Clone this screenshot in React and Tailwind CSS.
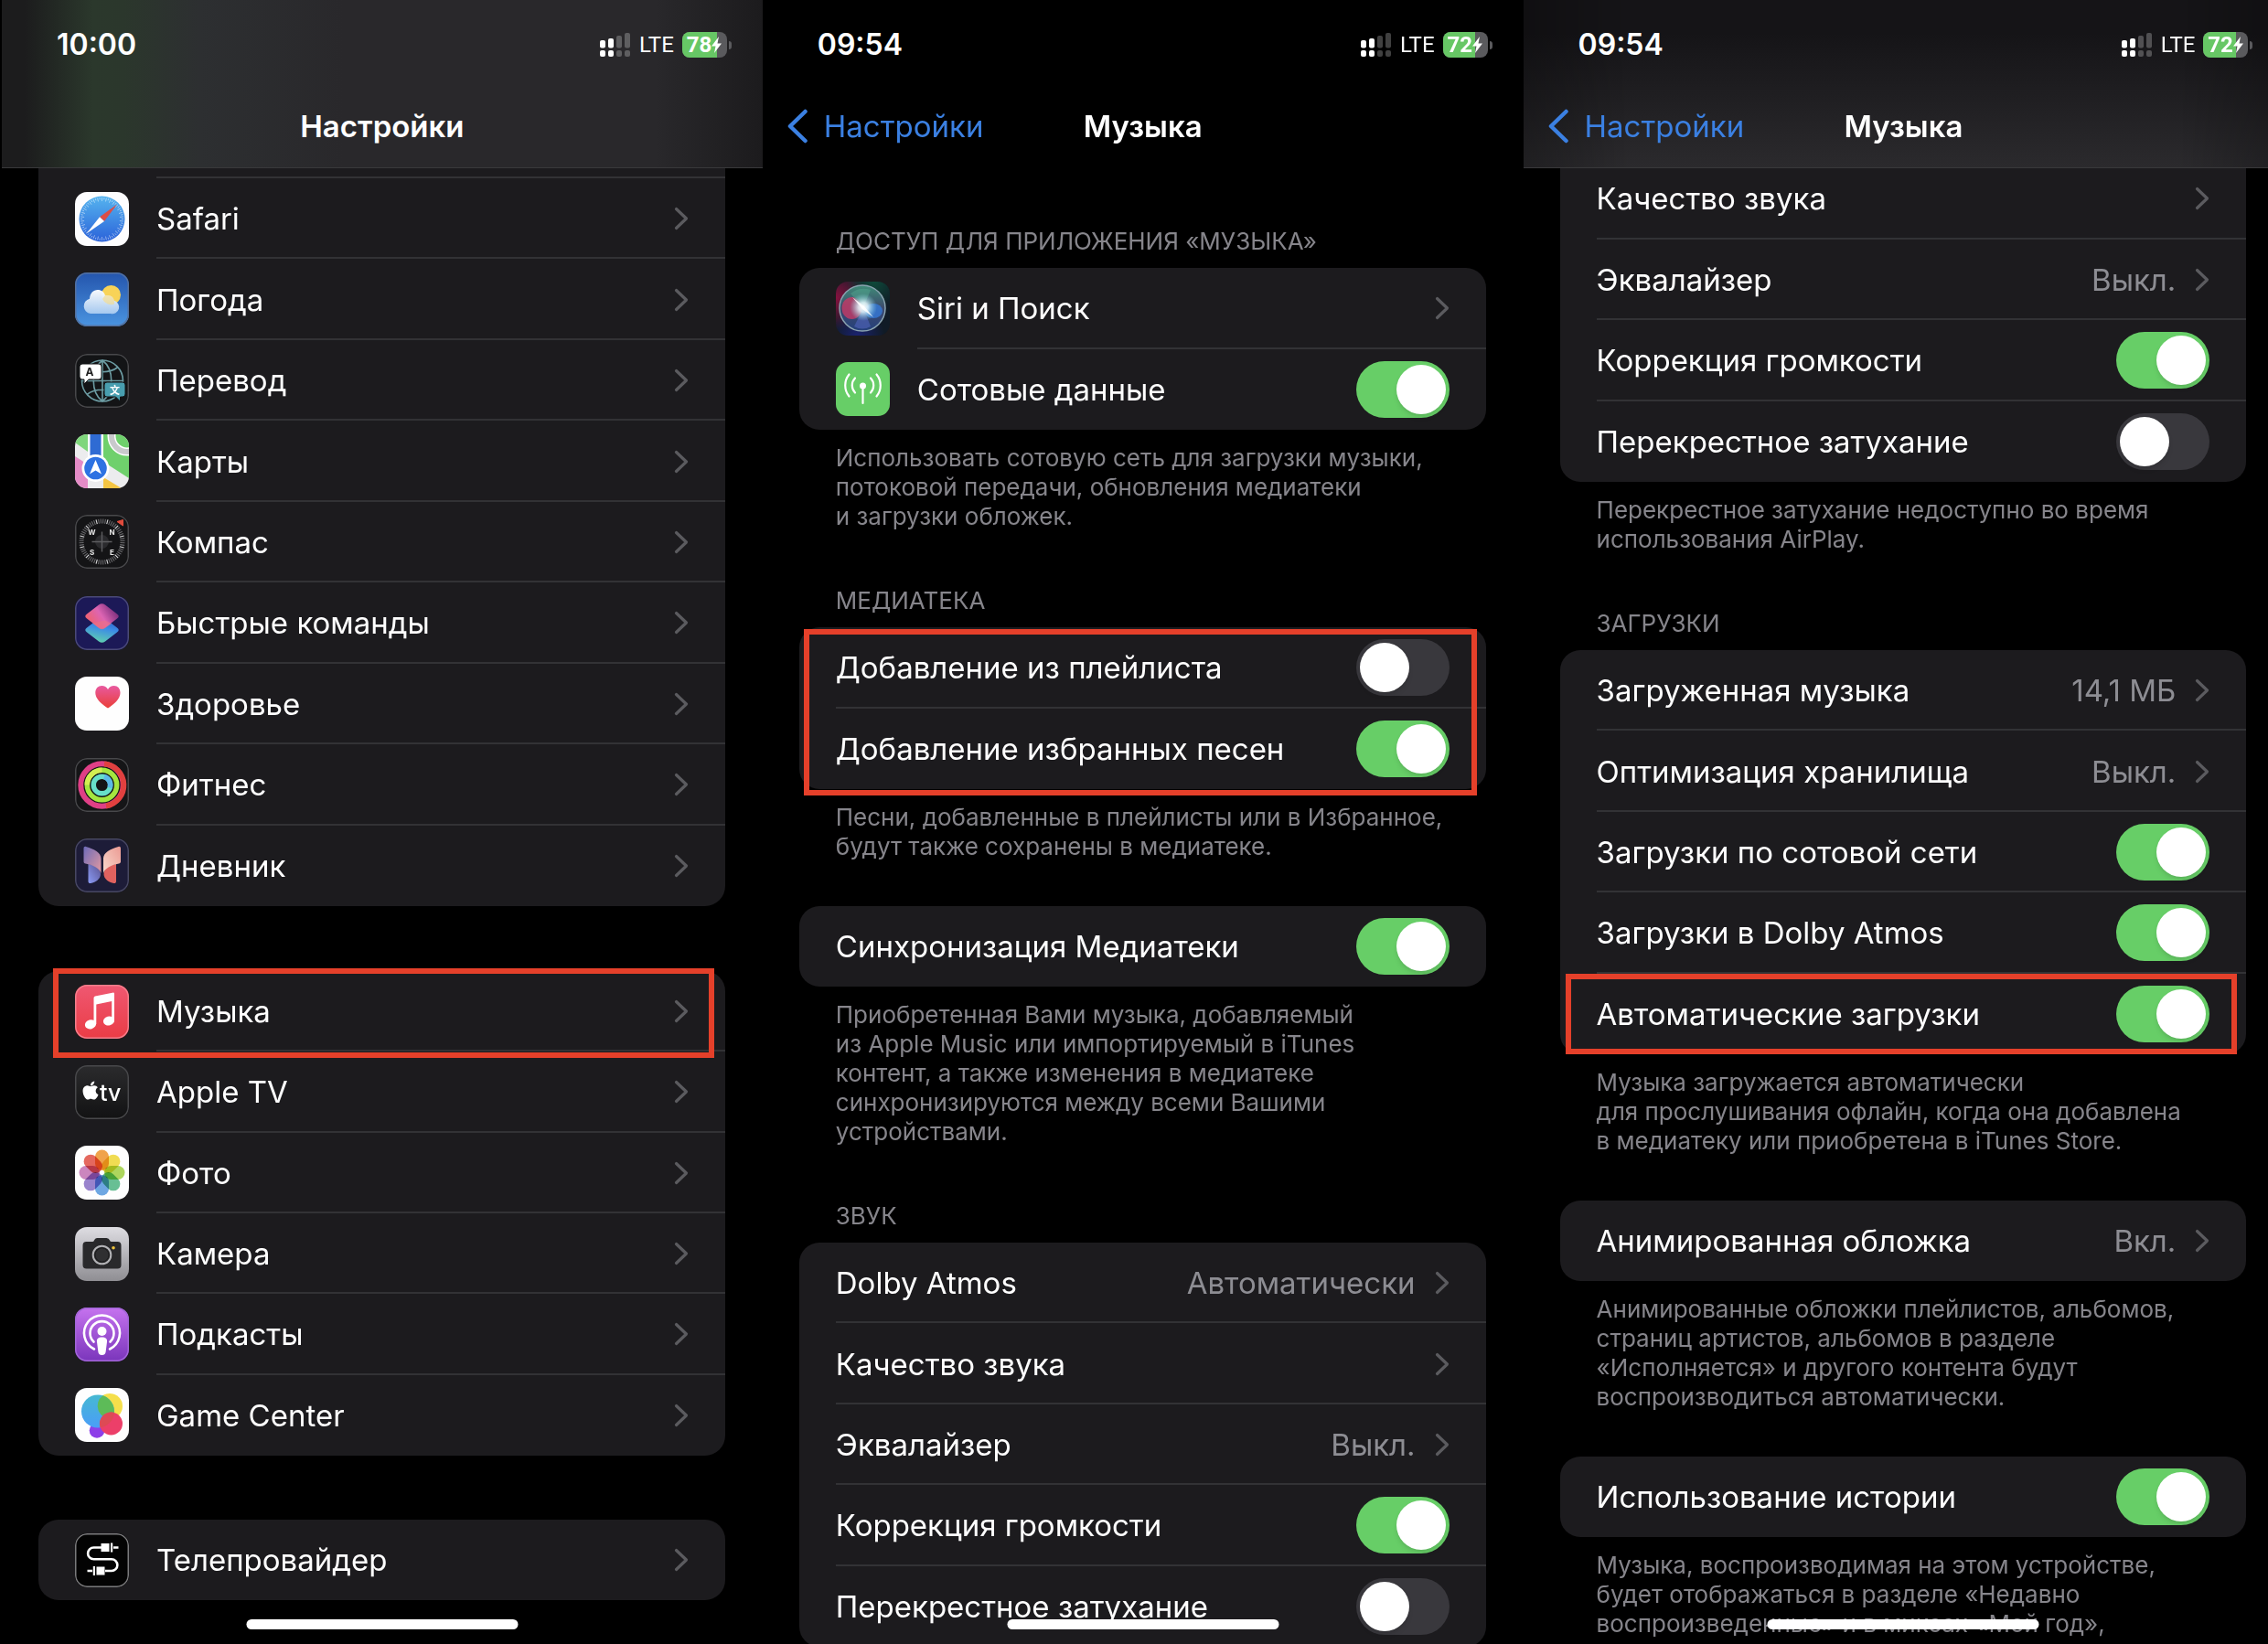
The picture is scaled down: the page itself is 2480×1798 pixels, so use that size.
import { FaApple } from "react-icons/fa";

/* ---------- App icons, 59x59 ---------- */

const Tile = ({ fill, stroke, children }) => (
  <svg viewBox="0 0 59 59" className="size-[59px] shrink-0 overflow-hidden rounded-[13px]" aria-hidden="true">
    <rect width="59" height="59" fill={fill} />
    {children}
    {stroke && <rect x="0.75" y="0.75" width="57.5" height="57.5" rx="12.5" fill="none" stroke={stroke} strokeWidth="1.5" />}
  </svg>
);

const ticks = (count) => Array.from({ length: count }, (_, i) => (i * 360) / count);

const SafariIcon = () => (
  <Tile fill="#fdfdfe">
    <defs>
      <linearGradient id="safari" x1="0" y1="0" x2="0" y2="1">
        <stop offset="0" stopColor="#55b4ef" />
        <stop offset="1" stopColor="#2b62d9" />
      </linearGradient>
    </defs>
    <circle cx="29.5" cy="29.5" r="25" fill="url(#safari)" />
    {ticks(60).map((a, i) => (
      <path key={a} d={i % 2 ? "M29.5 6v2.2" : "M29.5 6v4"} stroke="#fff" strokeOpacity="0.65" strokeWidth="0.7" transform={`rotate(${a} 29.5 29.5)`} />
    ))}
    <path d="M46 13.500L27 27.200L32 32Z" fill="#dc4c46" />
    <path d="M12.500 45.500L27 27.200L32 32Z" fill="#fff" />
  </Tile>
);

const WeatherIcon = () => (
  <Tile fill="url(#sky)" stroke="#54719f">
    <defs>
      <linearGradient id="sky" x1="0" y1="0" x2="0" y2="1">
        <stop offset="0" stopColor="#2455ad" />
        <stop offset="1" stopColor="#4a94e0" />
      </linearGradient>
      <linearGradient id="cloud" x1="0" y1="0" x2="0" y2="1">
        <stop offset="0" stopColor="#fff" />
        <stop offset="1" stopColor="#a9cbf0" />
      </linearGradient>
    </defs>
    <circle cx="39.500" cy="24.500" r="10.500" fill="#f8d357" />
    <path d="M17 45a8.300 8.300 0 0 1-1-16.300C16.500 22.500 20 19 24.800 19c4.200 0 7 2.300 8.200 6 6.500-.8 9.500 2.500 9.700 5.800A7.300 7.300 0 0 1 39 45Z" fill="url(#cloud)" fillOpacity="0.96" />
    <path d="M33 25c6.500-.8 9.500 2.500 9.700 5.800l.4 3.700A10.500 10.500 0 0 1 30 29Z" fill="#f8d97a" fillOpacity="0.55" />
  </Tile>
);

const TranslateIcon = () => (
  <Tile fill="#131416" stroke="#48484b">
    <g fill="none" stroke="#6c9ca3" strokeWidth="1.6">
      <circle cx="30" cy="29.500" r="22.500" />
      <path d="M30 7v45M7.500 29.500h45M30 7C17 17 17 42 30 52M30 7c13 10 13 35 0 45M13 14.500c9 7 25 7 34 0M13 44.500c9-7 25-7 34 0" />
    </g>
    <path d="M8 11h18a3 3 0 0 1 3 3v11a3 3 0 0 1-3 3H15l-5 5v-5H8a3 3 0 0 1-3-3V14a3 3 0 0 1 3-3Z" fill="#fff" stroke="#131416" strokeWidth="1" />
    <text x="16" y="24" fontSize="12" fontWeight="700" fill="#222" textAnchor="middle">A</text>
    <path d="M35 31h17a3 3 0 0 1 3 3v10a3 3 0 0 1-3 3h-2.500v5l-5-5H35a3 3 0 0 1-3-3V34a3 3 0 0 1 3-3Z" fill="#489eaf" stroke="#131416" strokeWidth="1" />
    <text x="43.500" y="43.500" fontSize="11" fontWeight="700" fill="#fff" textAnchor="middle" className="font-['Noto_Sans_CJK_SC',sans-serif]">文</text>
  </Tile>
);

const MapsIcon = () => (
  <Tile fill="#ececee">
    <path d="M0 0h14v19L0 9Z" fill="#7fd67c" />
    <path d="M31 0h28v48L31 30Z" fill="#6fd06c" />
    <circle cx="57" cy="2" r="17" fill="none" stroke="#fff" strokeWidth="9" />
    <circle cx="57" cy="2" r="17" fill="none" stroke="#c9c9cc" strokeWidth="6" />
    <path d="M0 24l14 9v26H0Z" fill="#e48bc6" />
    <path d="M31 47l20 12H31Z" fill="#f5c543" />
    <path d="M14 0h17v59H14Z" fill="#fff" />
    <path d="M14 48h17v11H14Z" fill="#ececee" />
    <path d="M16.500 0h12v30h-12Z" fill="#2f6bd3" />
    <circle cx="22.500" cy="37" r="15" fill="#fff" />
    <circle cx="22.500" cy="37" r="12.300" fill="#2e72e2" />
    <path d="M22.500 28l6.500 15.500-6.500-4-6.500 4Z" fill="#fff" />
  </Tile>
);

const CompassIcon = () => (
  <Tile fill="#141416" stroke="#48484b">
    {ticks(60).map((a, i) => (
      <path key={a} d="M29.500 4.500v5" stroke={i % 5 ? "#6a6a6d" : "#dcdcde"} strokeWidth="1.1" transform={`rotate(${a + 15} 29.5 29.5)`} />
    ))}
    <circle cx="29.500" cy="29.500" r="7.500" fill="#2a2a2d" />
    <path d="M29.500 18.500v22M18.500 29.500h22" stroke="#5e5e61" strokeWidth="1.4" />
    <g fontSize="8" fontWeight="700" fill="#e6e6e6" textAnchor="middle">
      <text x="18.500" y="22">W</text>
      <text x="40.500" y="22">N</text>
      <text x="18.500" y="43.500">S</text>
      <text x="40.500" y="43.500">E</text>
    </g>
    <path d="M52.500 5.500v6.500L46 7.500Z" fill="#e04b3c" stroke="#e04b3c" strokeLinejoin="round" />
  </Tile>
);

const ShortcutsIcon = () => (
  <Tile fill="#1c1957" stroke="#4b4a78">
    <defs>
      <linearGradient id="scTop" x1="0.1" y1="0.7" x2="0.9" y2="0.3">
        <stop offset="0" stopColor="#ee6170" />
        <stop offset="0.5" stopColor="#dd65b3" />
        <stop offset="1" stopColor="#81317f" />
      </linearGradient>
      <linearGradient id="scBottom" x1="0.3" y1="1" x2="0.6" y2="0">
        <stop offset="0" stopColor="#62d3ac" />
        <stop offset="0.6" stopColor="#3c8be6" />
        <stop offset="1" stopColor="#2c5cc4" />
      </linearGradient>
    </defs>
    <path d="M26 24.500q3.500-2.500 7 0L46 34.500q3.500 2.500 0 5L33 49.500q-3.500 2.500-7 0L13 39.500q-3.500-2.500 0-5Z" fill="url(#scBottom)" />
    <path d="M26 9.500q3.500-2.500 7 0L46 19.500q3.500 2.500 0 5L33 34.500q-3.500 2.500-7 0L13 24.500q-3.500-2.500 0-5Z" fill="url(#scTop)" />
    <path d="M33 26.500l7 3.500-7 5q-3.500 2.500-7 0l-7-5.500Z" fill="#f07280" fillOpacity="0.55" />
  </Tile>
);

const HealthIcon = () => (
  <Tile fill="#fefefe">
    <defs>
      <linearGradient id="heart" x1="0" y1="0" x2="0" y2="1">
        <stop offset="0" stopColor="#e8599f" />
        <stop offset="1" stopColor="#ea3f38" />
      </linearGradient>
    </defs>
    <path d="M36 34.500C29 30 22.300 24.500 22.300 17.500c0-4.500 3-7.500 7-7.500 3 0 5.400 1.500 6.700 4 1.300-2.500 3.700-4 6.700-4 4 0 6.800 3 6.800 7.500 0 7-6.500 12.500-13.500 17Z" fill="url(#heart)" />
  </Tile>
);

const FitnessIcon = () => (
  <Tile fill="#151517" stroke="#48484b">
    <g fill="none" strokeWidth="6">
      <circle cx="29.500" cy="29.500" r="23.200" stroke="#df3f86" />
      <path d="M32 6.500a23.200 23.200 0 0 1 2 46" stroke="#e0403f" />
      <circle cx="29.500" cy="29.500" r="16.200" stroke="#a4e53f" strokeWidth="5.500" />
      <path d="M29.500 13.300a16.200 16.200 0 0 0-16.200 16.200" stroke="#d3ee52" strokeWidth="5.500" />
      <circle cx="29.500" cy="29.500" r="9.300" stroke="#67dfc9" strokeWidth="5.500" />
      <path d="M32 20.500a9.300 9.300 0 0 1 6 12" stroke="#5bb8e6" strokeWidth="5.500" />
    </g>
  </Tile>
);

const JournalIcon = () => (
  <Tile fill="#1d1c38" stroke="#484862">
    <defs>
      <linearGradient id="jA" x1="0" y1="0" x2="1" y2="1">
        <stop offset="0" stopColor="#6d6bb8" />
        <stop offset="1" stopColor="#e49aa0" />
      </linearGradient>
      <linearGradient id="jB" x1="1" y1="0" x2="0" y2="1">
        <stop offset="0" stopColor="#eb9a93" />
        <stop offset="1" stopColor="#f9d9cc" />
      </linearGradient>
      <linearGradient id="jC" x1="1" y1="0" x2="0" y2="1">
        <stop offset="0" stopColor="#5a5290" />
        <stop offset="1" stopColor="#8b9cf6" />
      </linearGradient>
    </defs>
    <path d="M14.500 28c8 1 13.500 5.500 13.500 11 0 5-5 9-11 10-1.500.2-2.500-.7-2.500-2Z" fill="url(#jC)" />
    <path d="M45 28c-8 1-13.500 5.500-13.500 11 0 5 5 9 11 10 1.500.2 2.500-.7 2.500-2Z" fill="#e0625f" />
    <path d="M9.500 11c0-1.500 1-2.500 2.500-2 9 2.500 16.500 6.500 16.500 13v16c-1.500-5-8-9-17-10.500-1.300-.3-2-1-2-2.300Z" fill="url(#jA)" />
    <path d="M50 11c0-1.500-1-2.500-2.500-2-9 2.500-16.500 6.500-16.500 13v16c1.500-5 8-9 17-10.500 1.300-.3 2-1 2-2.300Z" fill="url(#jB)" />
  </Tile>
);

const MusicIcon = () => (
  <Tile fill="url(#music)" stroke="#f37f8c">
    <defs>
      <linearGradient id="music" x1="0" y1="0" x2="0" y2="1">
        <stop offset="0" stopColor="#ef5872" />
        <stop offset="1" stopColor="#ea3c45" />
      </linearGradient>
    </defs>
    <path d="M20.500 14.500q0-1.500 1.500-1.900L41 8.700q2-.4 2 1.300v28.500h-2.800V18L23.300 21.500V43h-2.800Z" fill="#fff" />
    <ellipse cx="17" cy="43.300" rx="6.200" ry="5" fill="#fff" transform="rotate(-15 17 43.3)" />
    <ellipse cx="37" cy="39.500" rx="6.200" ry="5" fill="#fff" transform="rotate(-15 37 39.5)" />
  </Tile>
);

const AppleTvIcon = () => (
  <Tile fill="url(#atv)" stroke="#48484b">
    <defs>
      <linearGradient id="atv" x1="0" y1="0" x2="0" y2="1">
        <stop offset="0" stopColor="#2b2b2d" />
        <stop offset="1" stopColor="#121213" />
      </linearGradient>
    </defs>
    <FaApple x="5.500" y="16" size="23" color="#fff" />
    <text x="27" y="38.500" fontSize="25" fontWeight="500" fill="#fff">tv</text>
  </Tile>
);

const petals = ["#f09a37", "#f0d93f", "#a5d34b", "#58b98a", "#5e9fe0", "#8f77c9", "#c77ab8", "#e2584d"];

const PhotosIcon = () => (
  <Tile fill="#fefefe">
    {petals.map((color, i) => (
      <rect key={color} x="22" y="4.500" width="15" height="22.500" rx="7.500" fill={color} fillOpacity="0.9" transform={`rotate(${i * 45} 29.5 29.5)`} className="mix-blend-multiply" />
    ))}
    <circle cx="29.500" cy="29.500" r="2" fill="#fff" />
  </Tile>
);

const CameraIcon = () => (
  <Tile fill="url(#camera)">
    <defs>
      <linearGradient id="camera" x1="0" y1="0" x2="0" y2="1">
        <stop offset="0" stopColor="#dedde2" />
        <stop offset="1" stopColor="#8f8e93" />
      </linearGradient>
    </defs>
    <path d="M12.500 16H19q1.500 0 2-1.500.8-2.500 3-2.500h10.500q2.500 0 3.500 2.500.5 1.500 2 1.500h6.500q4 0 4 4v21.500q0 4-4 4h-34q-4 0-4-4V20q0-4 4-4Z" fill="#29292b" />
    <circle cx="29.500" cy="30.500" r="9.800" fill="none" stroke="#b3b3b6" strokeWidth="2" />
    <circle cx="29.500" cy="30.500" r="7.500" fill="#2f2f31" stroke="#1b1b1c" />
    <circle cx="42" cy="22.700" r="1.800" fill="#f1c53c" />
  </Tile>
);

const PodcastsIcon = () => (
  <Tile fill="url(#pod)" stroke="#a266d8">
    <defs>
      <linearGradient id="pod" x1="0" y1="0" x2="0" y2="1">
        <stop offset="0" stopColor="#c673ef" />
        <stop offset="1" stopColor="#7a35bb" />
      </linearGradient>
    </defs>
    <g fill="none" stroke="#fff" strokeWidth="2.600" strokeLinecap="round">
      <path d="M21 45.500a19.500 19.500 0 1 1 17 0" />
      <path d="M20.500 37.500a13 13 0 1 1 18 0" />
    </g>
    <circle cx="29.500" cy="26" r="5" fill="#fff" />
    <path d="M29.500 32.500c4 0 6 1.500 5.500 5l-1.300 10.500c-.3 2.500-1.500 4-4.200 4s-3.900-1.500-4.200-4L24 37.500c-.5-3.500 1.500-5 5.500-5Z" fill="#fff" />
  </Tile>
);

const GameCenterIcon = () => (
  <Tile fill="#fefefe">
    <defs>
      <linearGradient id="gcBlue" x1="0" y1="0" x2="0" y2="1">
        <stop offset="0" stopColor="#46b9d2" />
        <stop offset="1" stopColor="#4a9df8" />
      </linearGradient>
    </defs>
    <circle cx="24" cy="46.500" r="8.300" fill="#8d3fe8" />
    <circle cx="38" cy="20" r="14" fill="#f5df4b" />
    <circle cx="25" cy="25.500" r="18" fill="url(#gcBlue)" />
    <path d="M30.500 8.300A18 18 0 0 1 41 33.500 14 14 0 0 1 30.500 8.300Z" fill="#5dbb58" />
    <circle cx="39.500" cy="39" r="12.500" fill="#ec3f69" />
    <path d="M43 27a12.500 12.500 0 0 0-14 5.500 12 12 0 0 0-1.300 10.800A18 18 0 0 0 43 27Z" fill="#dd4a55" />
  </Tile>
);

const TvProviderIcon = () => (
  <Tile fill="#030303" stroke="#7a7a7c">
    <path d="M29 15.500h-8.500a6.300 6.300 0 0 0 0 12.800H40a6.300 6.300 0 0 1 0 12.700h-7" fill="none" stroke="#fff" strokeWidth="2.600" />
    <path d="M28.500 11h9v9h-9ZM39 10.500h2.200v10H39ZM42 14.200h5.500v2.600H42ZM23.500 36.500h9v9h-9ZM19.800 36h2.200v10h-2.200ZM13.500 39.700H19v2.600h-5.500Z" fill="#fff" />
  </Tile>
);

const SiriIcon = () => (
  <Tile fill="#101b26">
    <defs>
      <radialGradient id="sRed" cx="0" cy="0.3" r="0.6">
        <stop offset="0" stopColor="#86123f" />
        <stop offset="1" stopColor="#86123f" stopOpacity="0" />
      </radialGradient>
      <radialGradient id="sGreen" cx="0.7" cy="0" r="0.5">
        <stop offset="0" stopColor="#0e4a3a" />
        <stop offset="1" stopColor="#0e4a3a" stopOpacity="0" />
      </radialGradient>
      <radialGradient id="sBlue" cx="0.4" cy="1" r="0.5">
        <stop offset="0" stopColor="#1a2270" />
        <stop offset="1" stopColor="#1a2270" stopOpacity="0" />
      </radialGradient>
      <radialGradient id="sGlow">
        <stop offset="0" stopColor="#fff" />
        <stop offset="0.35" stopColor="#e6fbff" stopOpacity="0.85" />
        <stop offset="1" stopColor="#7fd0e0" stopOpacity="0" />
      </radialGradient>
      <linearGradient id="sOrb" x1="0" y1="0" x2="0" y2="1">
        <stop offset="0" stopColor="#3f8c78" />
        <stop offset="0.5" stopColor="#3d4a6c" />
        <stop offset="1" stopColor="#24407c" />
      </linearGradient>
    </defs>
    <rect width="59" height="59" fill="url(#sRed)" />
    <rect width="59" height="59" fill="url(#sGreen)" />
    <rect width="59" height="59" fill="url(#sBlue)" />
    <circle cx="29" cy="29" r="25" fill="url(#sOrb)" stroke="#8aa3b0" strokeWidth="1.500" />
    <ellipse cx="17.500" cy="29" rx="11" ry="12" fill="#c53a67" fillOpacity="0.8" />
    <ellipse cx="41" cy="32" rx="10" ry="8" fill="#3577d2" fillOpacity="0.85" />
    <path d="M30 29L20 49q9 5 18 0Z" fill="#4c5fb4" fillOpacity="0.7" />
    <path d="M30 29L16 13q10-8 22-4Z" fill="#52a58d" fillOpacity="0.5" />
    <circle cx="30" cy="28" r="15" fill="url(#sGlow)" />
    <path d="M18 17l13 10 10 12-12-9Z" fill="#fff" fillOpacity="0.85" />
  </Tile>
);

const CellularIcon = () => (
  <Tile fill="#67ce67">
    <g fill="none" stroke="#fff" strokeWidth="2.200" strokeLinecap="round">
      <path d="M29.500 27v18" />
      <path d="M21 33.500a11.500 11.500 0 0 1 0-16M38 33.500a11.500 11.500 0 0 0 0-16" />
      <path d="M14.500 37.500a19 19 0 0 1 0-24M44.500 37.500a19 19 0 0 0 0-24" />
    </g>
    <circle cx="29.500" cy="26" r="3.500" fill="#fff" />
  </Tile>
);

/* ---------- Status bar ---------- */

const Signal = () => (
  <svg width="34" height="28" viewBox="0 0 34 28" aria-hidden="true">
    <g fill="#fff">
      <rect x="0" y="9" width="6" height="8.500" rx="2" />
      <rect x="9" y="7" width="6" height="10.500" rx="2" />
      <rect x="0" y="20" width="6" height="7" rx="2" />
      <rect x="9" y="20" width="6" height="7" rx="2" />
    </g>
    <g fill="#fff" fillOpacity="0.25">
      <rect x="18" y="4" width="6" height="13.500" rx="2" />
      <rect x="27" y="1" width="6" height="16.500" rx="2" />
      <rect x="18" y="20" width="6" height="7" rx="2" />
      <rect x="27" y="20" width="6" height="7" rx="2" />
    </g>
  </svg>
);

const Battery = ({ level }) => (
  <div className="flex items-center gap-[2px]">
    <div className="relative flex h-7 w-[49px] items-center overflow-hidden rounded-[8px] bg-[#5a5a5d] pl-[5px]">
      <div className="absolute inset-y-0 left-0 bg-[#67c765]" style={{ width: `${level}%` }} />
      <span className="relative font-['Roboto',sans-serif] text-[24px] leading-7 font-bold text-white">{level}</span>
      <svg width="11" height="18" viewBox="0 0 11 18" className="relative shrink-0" aria-hidden="true">
        <path d="M8 0L0 10.500h4.500L3 18l8-10.500H6.500Z" fill="#fff" />
      </svg>
    </div>
    <div className="h-[9px] w-[3px] rounded-r-full bg-[#5a5a5d]" />
  </div>
);

const StatusBar = ({ time, level }) => (
  <div className="flex h-24 items-center justify-between pt-[2px] pr-[34px] pl-[60px]">
    <span className="text-[32px] leading-10 font-semibold">{time}</span>
    <div className="flex items-center gap-[9px]">
      <Signal />
      <span className="font-['Roboto',sans-serif] text-[24px] leading-7">LTE</span>
      <Battery level={level} />
    </div>
  </div>
);

const NavBar = ({ title, back }) => (
  <div className="relative flex h-[87px] items-center justify-center pb-[3px]">
    {back && (
      <a href="#settings" className="absolute left-[26px] flex items-center gap-[17px] text-[#3b80e2]">
        <svg width="24" height="38" viewBox="0 0 24 38" aria-hidden="true">
          <path d="M20.500 3L4 19l16.500 16" fill="none" stroke="currentColor" strokeWidth="4.500" strokeLinecap="round" strokeLinejoin="round" />
        </svg>
        <span className="text-[33px] leading-10">{back}</span>
      </a>
    )}
    <h1 className="text-[33px] leading-10 font-semibold">{title}</h1>
  </div>
);

/* ---------- List ---------- */

const Chevron = () => (
  <svg width="16" height="26" viewBox="0 0 16 26" className="shrink-0" aria-hidden="true">
    <path d="M2.500 2.500L13.500 13 2.500 23.500" fill="none" stroke="#5b5b5f" strokeWidth="3.200" strokeLinecap="round" strokeLinejoin="round" />
  </svg>
);

const Toggle = ({ on }) => (
  <input
    type="checkbox"
    role="switch"
    defaultChecked={on}
    className="relative h-[62px] w-[102px] shrink-0 appearance-none rounded-full bg-[#39383d] before:absolute before:top-1 before:left-1 before:size-[54px] before:rounded-full before:bg-white before:shadow-md checked:bg-[#67ce67] checked:before:left-11"
  />
);

const Row = ({ icon: Icon, label, value, toggle }) => {
  const body = (
    <>
      {Icon && <Icon />}
      <span className="flex h-full flex-1 items-center justify-between border-y-2 border-t-transparent border-b-[#323235] pr-10 group-last:border-b-transparent">
        <span>{label}</span>
        {toggle === undefined ? (
          <span className="flex items-center gap-[21px] text-[#8d8d93]">
            {value}
            <Chevron />
          </span>
        ) : (
          <Toggle on={toggle} />
        )}
      </span>
    </>
  );
  const rowClass = "flex h-full items-center gap-[30px] pl-10 text-[33px] leading-10";

  return (
    <li className="group">
      {toggle === undefined ? (
        <a href="#open" className={rowClass}>{body}</a>
      ) : (
        <label className={rowClass}>{body}</label>
      )}
    </li>
  );
};

// ten rows take 884px, so the height is set on the card and shared between its rows
const cardHeight = {
  1: "h-[88px]",
  2: "h-[177px]",
  4: "h-[354px]",
  5: "h-[442px]",
  6: "h-[530px]",
  9: "h-[796px]",
};

const Card = ({ rows, square, mark }) => (
  <div className="relative">
    <ul className={`grid auto-rows-fr overflow-hidden bg-[#1c1b1e] ${square ? "rounded-b-[22px]" : "rounded-[22px]"} ${cardHeight[rows.length]}`}>
      {rows.map((row) => (
        <Row key={row.label} {...row} />
      ))}
    </ul>
    {mark && <div className={`pointer-events-none absolute border-6 border-[#e5402a] ${mark}`} />}
  </div>
);

const SectionTitle = ({ children }) => <h2 className="mb-[13px] px-10 text-[26px] leading-8 text-[#86858b]">{children}</h2>;

const Note = ({ lines }) => (
  <p className="px-10 pt-[15px] text-[26px] leading-8 whitespace-nowrap text-[#86858b]">
    {lines.map((line) => (
      <span key={line} className="block">{line}</span>
    ))}
  </p>
);

const Phone = ({ time, level, title, back, bar, children }) => (
  <section className="relative flex h-full flex-col overflow-hidden bg-black">
    <header className={`relative z-10 shrink-0 border-b ${bar}`}>
      <StatusBar time={time} level={level} />
      <NavBar title={title} back={back} />
    </header>
    <div className="pr-[41px] pl-10">{children}</div>
    <div className="absolute bottom-4 left-1/2 h-[11px] w-[297px] -translate-x-1/2 rounded-full bg-white" />
  </section>
);

const appRows = [
  { icon: SafariIcon, label: "Safari" },
  { icon: WeatherIcon, label: "Погода" },
  { icon: TranslateIcon, label: "Перевод" },
  { icon: MapsIcon, label: "Карты" },
  { icon: CompassIcon, label: "Компас" },
  { icon: ShortcutsIcon, label: "Быстрые команды" },
  { icon: HealthIcon, label: "Здоровье" },
  { icon: FitnessIcon, label: "Фитнес" },
  { icon: JournalIcon, label: "Дневник" },
];

const mediaRows = [
  { icon: MusicIcon, label: "Музыка" },
  { icon: AppleTvIcon, label: "Apple TV" },
  { icon: PhotosIcon, label: "Фото" },
  { icon: CameraIcon, label: "Камера" },
  { icon: PodcastsIcon, label: "Подкасты" },
  { icon: GameCenterIcon, label: "Game Center" },
];

const SettingsPhone = () => (
  <Phone
    time="10:00"
    level={78}
    title="Настройки"
    bar="border-[#39393b] bg-[linear-gradient(90deg,#1c1c1d_3%,#2b382c_12%,#2b372c_16%,#2d2f31_26%,#29282b_45%,#29282b_86%,#1c1b1d)]"
  >
    <div className="bg-[#1c1b1e] pl-[129px]">
      <div className="h-[11px] border-b-2 border-[#323235]" />
    </div>
    <Card rows={appRows} square />
    <div className="mt-[71px]">
      <Card rows={mediaRows} mark="-top-[3px] right-3 left-4 h-[98px]" />
    </div>
    <div className="mt-[70px]">
      <Card rows={[{ icon: TvProviderIcon, label: "Телепровайдер" }]} />
    </div>
  </Phone>
);

const MusicPhone = () => (
  <Phone time="09:54" level={72} title="Музыка" back="Настройки" bar="border-transparent bg-black">
    <div className="mt-16">
      <SectionTitle>ДОСТУП ДЛЯ ПРИЛОЖЕНИЯ «МУЗЫКА»</SectionTitle>
      <Card
        rows={[
          { icon: SiriIcon, label: "Siri и Поиск" },
          { icon: CellularIcon, label: "Сотовые данные", toggle: true },
        ]}
      />
      <Note lines={["Использовать сотовую сеть для загрузки музыки,", "потоковой передачи, обновления медиатеки", "и загрузки обложек."]} />
    </div>
    <div className="mt-[60px]">
      <SectionTitle>МЕДИАТЕКА</SectionTitle>
      <Card
        rows={[
          { label: "Добавление из плейлиста", toggle: false },
          { label: "Добавление избранных песен", toggle: true },
        ]}
        mark="top-[2px] right-[10px] -bottom-[7px] left-[5px]"
      />
      <Note lines={["Песни, добавленные в плейлисты или в Избранное,", "будут также сохранены в медиатеке."]} />
    </div>
    <div className="mt-[49px]">
      <Card rows={[{ label: "Синхронизация Медиатеки", toggle: true }]} />
      <Note
        lines={[
          "Приобретенная Вами музыка, добавляемый",
          "из Apple Music или импортируемый в iTunes",
          "контент, а также изменения в медиатеке",
          "синхронизируются между всеми Вашими",
          "устройствами.",
        ]}
      />
    </div>
    <div className="mt-[60px]">
      <SectionTitle>ЗВУК</SectionTitle>
      <Card
        rows={[
          { label: "Dolby Atmos", value: "Автоматически" },
          { label: "Качество звука" },
          { label: "Эквалайзер", value: "Выкл." },
          { label: "Коррекция громкости", toggle: true },
          { label: "Перекрестное затухание", toggle: false },
        ]}
      />
    </div>
  </Phone>
);

const DownloadsPhone = () => (
  <Phone
    time="09:54"
    level={72}
    title="Музыка"
    back="Настройки"
    bar="border-[#39393b] bg-[linear-gradient(90deg,#00000040,transparent_14%,transparent_86%,#00000040),linear-gradient(#151417_20%,#2b2a2d)]"
  >
    <div className="-mt-[11px]">
      <Card
        square
        rows={[
          { label: "Качество звука" },
          { label: "Эквалайзер", value: "Выкл." },
          { label: "Коррекция громкости", toggle: true },
          { label: "Перекрестное затухание", toggle: false },
        ]}
      />
      <Note lines={["Перекрестное затухание недоступно во время", "использования AirPlay."]} />
    </div>
    <div className="mt-[60px]">
      <SectionTitle>ЗАГРУЗКИ</SectionTitle>
      <Card
        rows={[
          { label: "Загруженная музыка", value: "14,1 МБ" },
          { label: "Оптимизация хранилища", value: "Выкл." },
          { label: "Загрузки по сотовой сети", toggle: true },
          { label: "Загрузки в Dolby Atmos", toggle: true },
          { label: "Автоматические загрузки", toggle: true },
        ]}
        mark="right-[10px] bottom-0 left-[6px] h-[88px]"
      />
      <Note lines={["Музыка загружается автоматически", "для прослушивания офлайн, когда она добавлена", "в медиатеку или приобретена в iTunes Store."]} />
    </div>
    <div className="mt-[49px]">
      <Card rows={[{ label: "Анимированная обложка", value: "Вкл." }]} />
      <Note
        lines={[
          "Анимированные обложки плейлистов, альбомов,",
          "страниц артистов, альбомов в разделе",
          "«Исполняется» и другого контента будут",
          "воспроизводиться автоматически.",
        ]}
      />
    </div>
    <div className="mt-[49px]">
      <Card rows={[{ label: "Использование истории", toggle: true }]} />
      <Note lines={["Музыка, воспроизводимая на этом устройстве,", "будет отображаться в разделе «Недавно", "воспроизведенные» и в миксах «Мой год»,"]} />
    </div>
  </Phone>
);

export default function App() {
  return (
    <main className="h-screen overflow-hidden bg-black font-['Inter','Liberation_Sans',sans-serif] text-white">
      {/* the third screen runs slightly past the right edge */}
      <div className="grid h-full w-[100.7%] grid-cols-3 pl-[2px]">
        <SettingsPhone />
        <MusicPhone />
        <DownloadsPhone />
      </div>
    </main>
  );
}
